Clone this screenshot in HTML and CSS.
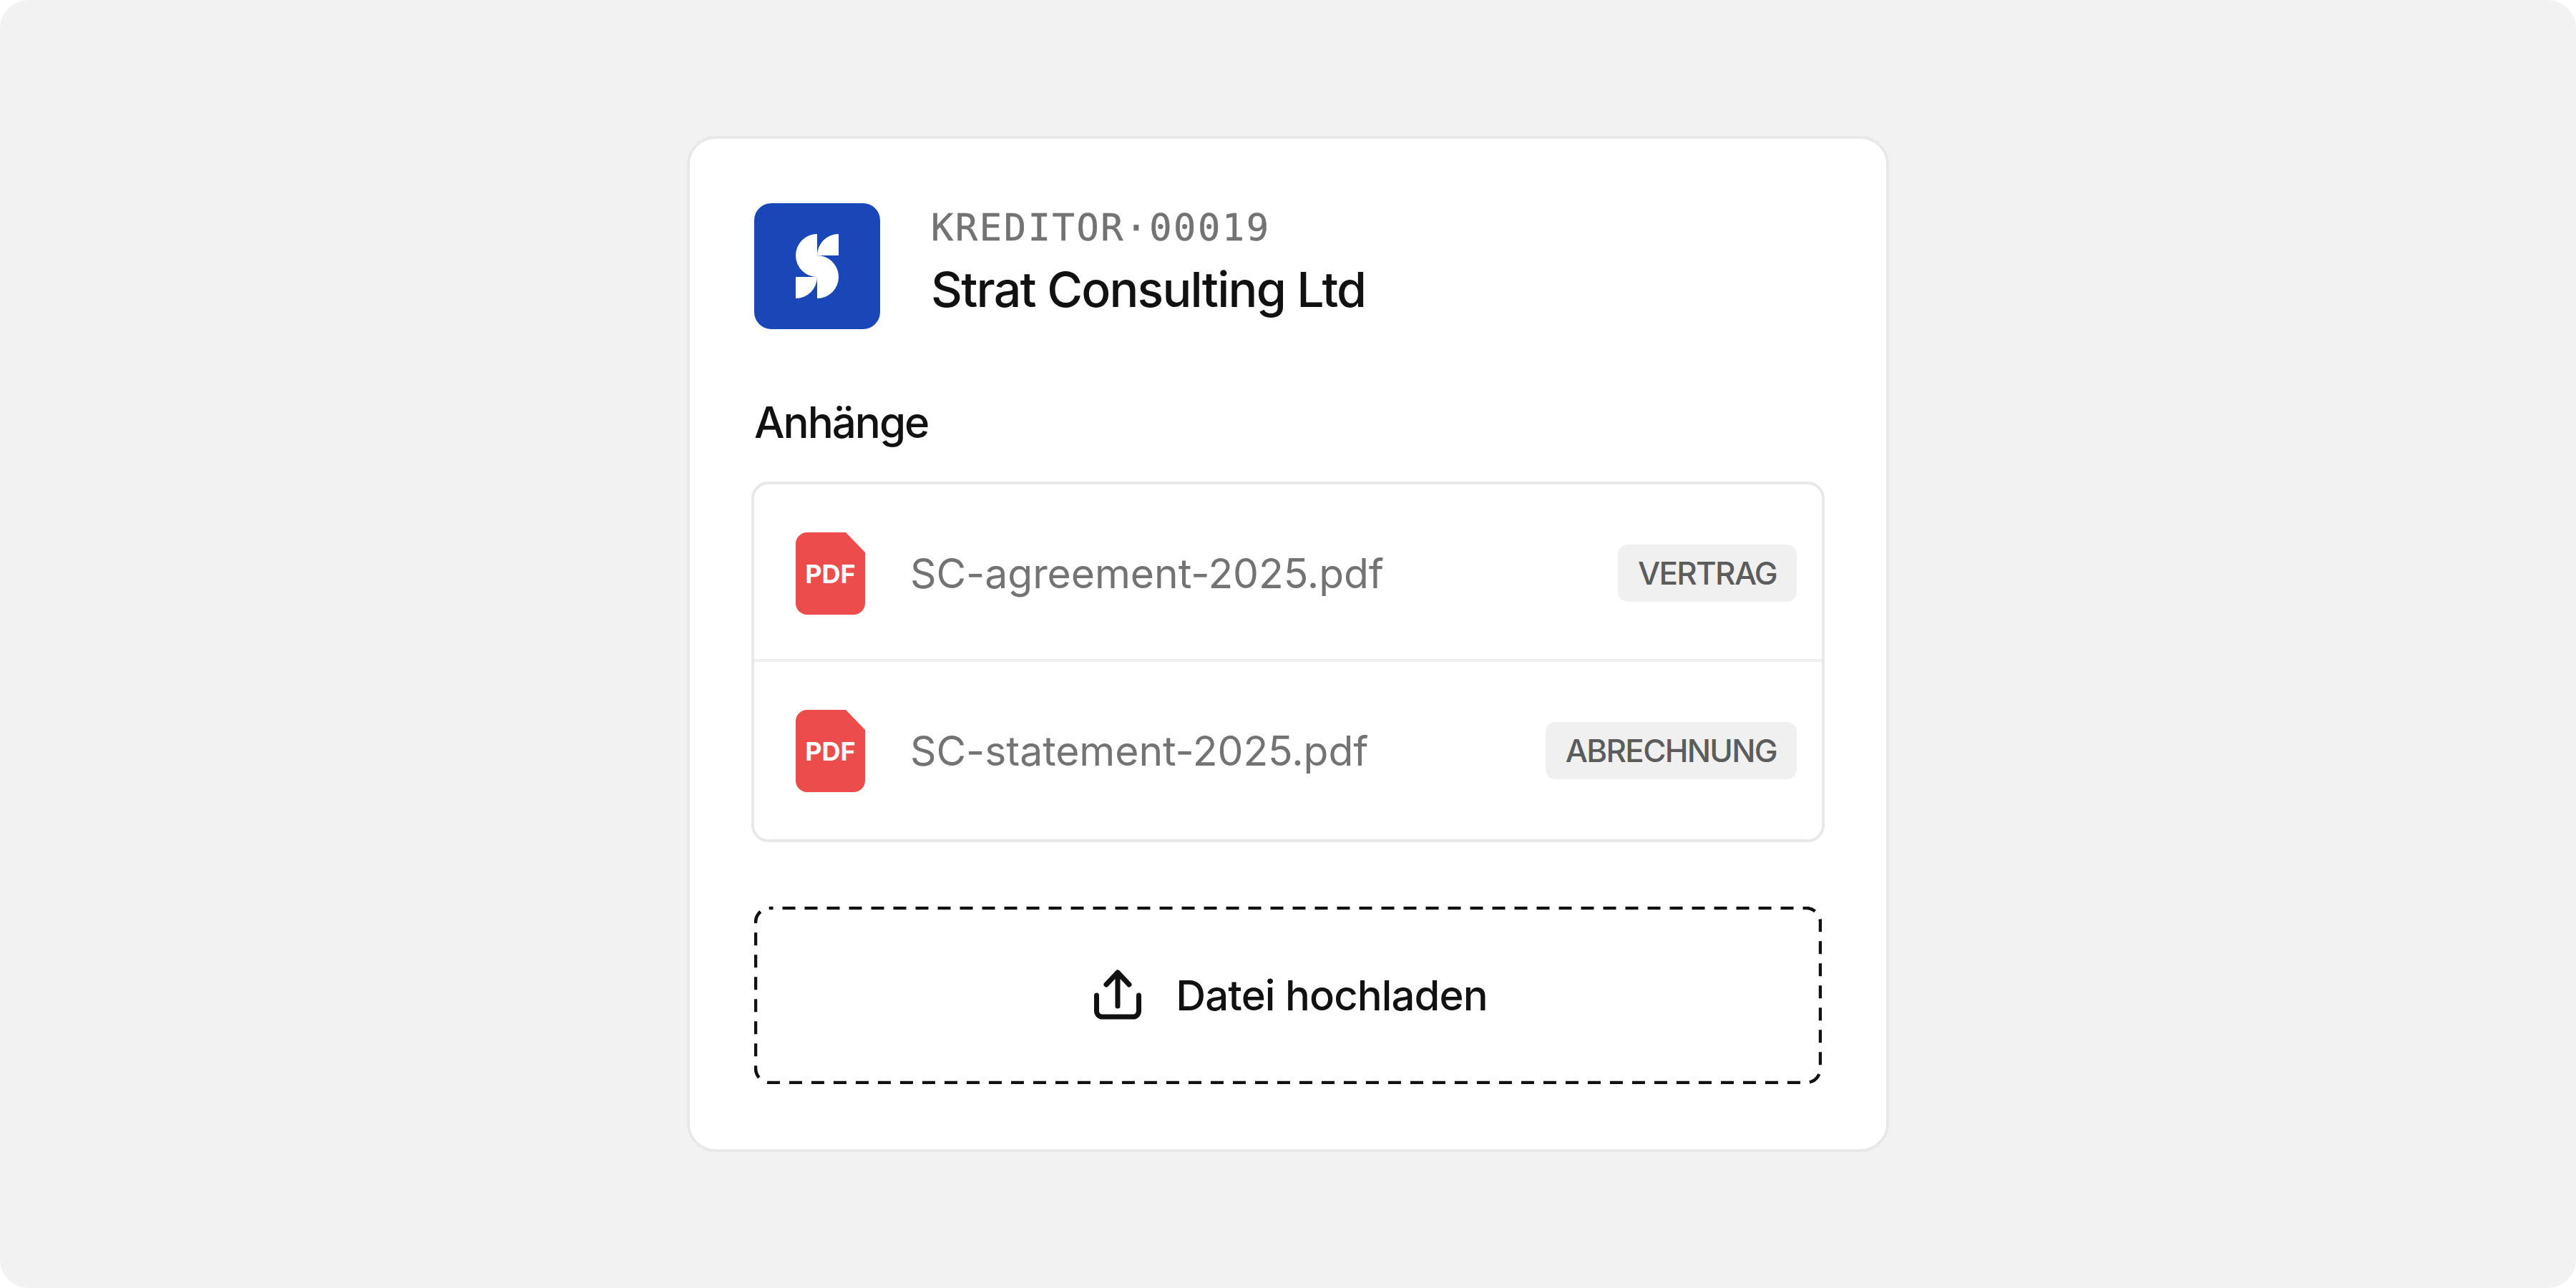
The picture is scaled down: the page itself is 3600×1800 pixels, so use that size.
FILE: index.html
```html
<!DOCTYPE html>
<html lang="de">
<head>
  <meta charset="UTF-8">
  <title>Strat Consulting Ltd</title>
  <link rel="stylesheet" href="styles.css">
</head>
<body>

  <div class="panel">
    <div class="card">

      <div class="vendor">
        <div class="logo">
          <svg width="60" height="90" viewBox="0 0 60 90">
            <path d="M30 0A30 30 0 0 0 30 60ZM60 0A30 30 0 0 0 30 30H60ZM30 30A30 30 0 0 1 30 90ZM0 60H30A30 30 0 0 1 0 90Z"/>
          </svg>
        </div>
        <div class="vendor-text">
          <div class="vendor-id">KREDITOR·00019</div>
          <div class="vendor-name">Strat Consulting Ltd</div>
        </div>
      </div>

      <div class="section-title">Anhänge</div>

      <div class="files">
        <div class="file">
          <svg class="pdf" width="97" height="115" viewBox="0 0 97 115">
            <path d="M16 0H70L97 28V99A16 16 0 0 1 81 115H16A16 16 0 0 1 0 99V16A16 16 0 0 1 16 0Z"/>
            <text x="48.5" y="71" text-anchor="middle">PDF</text>
          </svg>
          <span class="file-name">SC-agreement-2025.pdf</span>
          <span class="tag">VERTRAG</span>
        </div>
        <div class="file">
          <svg class="pdf" width="97" height="115" viewBox="0 0 97 115">
            <path d="M16 0H70L97 28V99A16 16 0 0 1 81 115H16A16 16 0 0 1 0 99V16A16 16 0 0 1 16 0Z"/>
            <text x="48.5" y="71" text-anchor="middle">PDF</text>
          </svg>
          <span class="file-name">SC-statement-2025.pdf</span>
          <span class="tag">ABRECHNUNG</span>
        </div>
      </div>

      <div class="upload">
        <svg class="upload-border" width="1492" height="248" viewBox="0 0 1492 248">
          <rect x="2" y="2" width="1488" height="244" rx="20"/>
        </svg>
        <svg class="upload-icon" width="72" height="72" viewBox="0 0 72 72">
          <path d="M36 51V5M20 21L36 4L52 21M6.500 36V58A8 8 0 0 0 14.500 66H57.500A8 8 0 0 0 65.500 58V36"/>
        </svg>
        <span>Datei hochladen</span>
      </div>

    </div>
  </div>

</body>
</html>
```

FILE: styles.css
```css
body {
  margin: 0;
  background-color: #ffffff;
  font-family: Inter, "Liberation Sans", sans-serif;
  color: #111111;
}

.panel {
  width: 3600px;
  height: 1800px;
  background-color: #f2f2f2;
  border-radius: 40px;
  display: flex;
  align-items: center;
  justify-content: center;
}

.card {
  box-sizing: border-box;
  width: 1680px;
  height: 1420px;
  padding: 90px;
  background-color: #ffffff;
  border: 4px solid #e8e8e8;
  border-radius: 40px;
}

.vendor {
  display: flex;
  gap: 71px;
}

.logo {
  width: 176px;
  height: 176px;
  background-color: #1a47b8;
  border-radius: 24px;
  display: flex;
  align-items: center;
  justify-content: center;
}

.logo svg {
  fill: #ffffff;
}

.vendor-text {
  display: flex;
  flex-direction: column;
  gap: 14px;
  padding-top: 4px;
}

.vendor-id {
  font-family: "DejaVu Sans Mono", monospace;
  font-size: 52px;
  line-height: 60px;
  letter-spacing: 2.6px;
  -webkit-text-stroke: 0.5px #737373;
  color: #737373;
}

.vendor-name {
  font-size: 68px;
  line-height: 84px;
  font-weight: 500;
  letter-spacing: -1.8px;
}

.section-title {
  margin-top: 90px;
  margin-bottom: 43px;
  font-size: 60px;
  line-height: 80px;
  font-weight: 500;
  letter-spacing: -2px;
}

.files {
  margin: 0 -4px;
  border: 4px solid #e8e8e8;
  border-radius: 24px;
}

.file {
  box-sizing: border-box;
  height: 248px;
  padding: 0 35px 0 58px;
  display: flex;
  align-items: center;
  gap: 63px;
  box-shadow: inset 0 -4px 0 #eeeeee;
}

.file:last-child {
  box-shadow: none;
}

.pdf path {
  fill: #ec4c4c;
}

.pdf text {
  font-size: 36px;
  font-weight: 700;
  fill: #ffffff;
}

.file-name {
  font-size: 57px;
  letter-spacing: -0.05px;
  color: #737373;
}

.tag {
  margin-left: auto;
  padding: 0 28px;
  height: 80px;
  display: flex;
  align-items: center;
  background-color: #f0f0f0;
  border-radius: 14px;
  font-size: 44px;
  font-weight: 500;
  letter-spacing: -1.7px;
  color: #5c5c5c;
}

.upload {
  position: relative;
  height: 248px;
  margin-top: 90px;
  padding-left: 5px;
  display: flex;
  align-items: center;
  justify-content: center;
  gap: 45px;
  font-size: 58px;
  font-weight: 500;
  letter-spacing: -0.9px;
}

.upload-border {
  position: absolute;
  top: 0;
  left: 0;
}

.upload-border rect {
  fill: none;
  stroke: #111111;
  stroke-width: 4.5;
  stroke-dasharray: 18 13;
  stroke-dashoffset: 13.5;
}

.upload-icon path {
  fill: none;
  stroke: #111111;
  stroke-width: 7;
  stroke-linecap: round;
  stroke-linejoin: round;
}
```
